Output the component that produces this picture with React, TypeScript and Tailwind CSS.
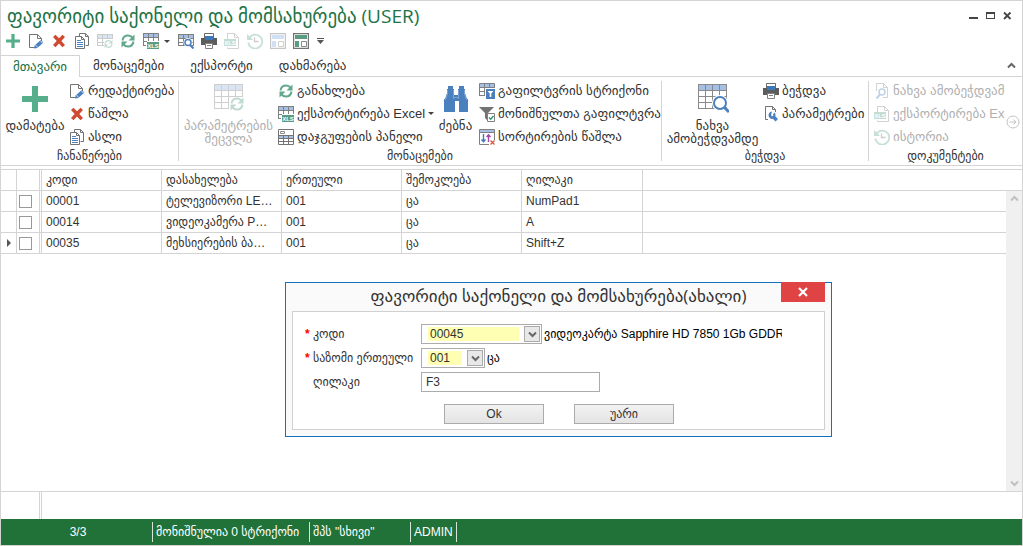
import type { ReactNode } from "react";

const FONT = "font-['Liberation_Sans','DejaVu_Sans',sans-serif]";

type IconProps = { className?: string };

function Svg({
  size = 16,
  box = 16,
  className = "",
  children,
}: {
  size?: number;
  box?: number;
  className?: string;
  children: ReactNode;
}) {
  return (
    <svg
      width={size}
      height={size}
      viewBox={`0 0 ${box} ${box}`}
      fill="none"
      aria-hidden="true"
      className={`shrink-0 ${className}`}
    >
      {children}
    </svg>
  );
}

function PlusIcon({ size = 14 }: { size?: number }) {
  return (
    <Svg size={size} box={26}>
      <path d="M10 0h6v10h10v6H16v10h-6V16H0v-6h10z" fill="#56af8a" />
    </Svg>
  );
}

function EditIcon() {
  return (
    <Svg>
      <path d="M7 14.5H1.500V1.500H9.500L13.500 5.500V8M9.500 1.500V5.500H13.500" stroke="#737373" />
      <path d="M6 15.500l.8-3.200 6-5.300 2.600 2.600-6 5.300z" fill="#4a80bd" />
      <path d="M7.200 11.800l2.600 2.600M12 7.500l2.700 2.700" stroke="#fff" strokeWidth=".8" />
    </Svg>
  );
}

function DeleteIcon() {
  return (
    <Svg>
      <path d="M2 4l2.500-2.300L8 5.300l3.500-3.600L14 4l-3.700 3.900L14 12l-2.500 2.300L8 10.500l-3.500 3.800L2 12l3.700-4.100z" fill="#cf4a30" />
    </Svg>
  );
}

function CopyIcon() {
  return (
    <Svg>
      <path d="M5.500 3.500v-3h6l3 3v9h-3M11.500.5v3h3" stroke="#737373" />
      <path d="M1.500 3.500h6l3 3v9h-9z" fill="#fff" stroke="#737373" />
      <path d="M7.500 3.500v3h3" stroke="#737373" />
      <path d="M3 7.500h4M3 9.500h6M3 11.500h6M3 13.500h6" stroke="#4a80bd" />
    </Svg>
  );
}

function Arrows() {
  return (
    <>
      <path d="M2.500 7.500C3 4.300 5.300 2.500 8 2.500c2 0 3.500.8 4.500 2.200" stroke="#62a88c" strokeWidth="2" />
      <path d="M14.500 1.500v6h-6z" fill="#62a88c" />
      <path d="M13.500 8.500C13 11.700 10.700 13.500 8 13.500c-2 0-3.500-.8-4.500-2.200" stroke="#62a88c" strokeWidth="2" />
      <path d="M1.500 14.500v-6h6z" fill="#62a88c" />
    </>
  );
}

function RefreshIcon() {
  return (
    <Svg>
      <Arrows />
    </Svg>
  );
}

function Grid() {
  return (
    <>
      <path d="M1 2h14v3H1z" fill="#a5c0e4" />
      <path d="M.5 1v12M5.500 1v12M10.500 1v12M15.500 1v12M0 1.500h16M0 5.500h16M0 9.500h16M0 12.500h16" stroke="#808080" shapeRendering="crispEdges" />
    </>
  );
}

function TableRefreshIcon() {
  return (
    <Svg className="opacity-40">
      <Grid />
      <path d="M7 6h9v10H7z" fill="#fff" />
      <g transform="translate(6.500 6) scale(.62)">
        <Arrows />
      </g>
    </Svg>
  );
}

function XlsLetters() {
  return (
    <>
      <path d="M4 9h12v7H4z" fill="#5a9c81" />
      <text x="10" y="15" textAnchor="middle" fontSize="6" fontWeight="700" fontFamily="Liberation Sans, sans-serif" fill="#fff">
        XLS
      </text>
    </>
  );
}

function TableXlsIcon() {
  return (
    <Svg>
      <path d="M1 1h14v3H1z" fill="#a5c0e4" />
      <path d="M0 .5h16M0 4.500h16M0 8.500h4M0 12.500h3M.5 0v13M5.500 0v8M10.500 0v8M15.500 0v8" stroke="#808080" shapeRendering="crispEdges" />
      <XlsLetters />
    </Svg>
  );
}

function PreviewIcon() {
  return (
    <Svg>
      <Grid />
      <circle cx="10" cy="9.500" r="4.500" fill="#fff" />
      <circle cx="10" cy="9.500" r="3" fill="#fff" stroke="#4a80bd" strokeWidth="1.500" />
      <path d="M12 12l3.500 3.500" stroke="#4a80bd" strokeWidth="2" />
    </Svg>
  );
}

function PrinterIcon() {
  return (
    <Svg>
      <path d="M3.500 5V.5h9V5" stroke="#6b6b6b" />
      <path d="M0 5h16v7H0z" fill="#5c5c5c" />
      <path d="M4 3h8v4H4z" fill="#3d78b8" />
      <path d="M4.500 10.500h7v5h-7z" fill="#fff" stroke="#808080" />
      <path d="M6 12.500h4" stroke="#808080" />
    </Svg>
  );
}

function DocXlsIcon() {
  return (
    <Svg className="opacity-35">
      <path d="M3.500 7V.5h7l4 4V8M3.500 14.500v1h11V8M10.500.5v4h4" stroke="#808080" />
      <path d="M0 6h12v7H0z" fill="#5a9c81" />
      <text x="6" y="12" textAnchor="middle" fontSize="6" fontWeight="700" fontFamily="Liberation Sans, sans-serif" fill="#fff">
        XLS
      </text>
    </Svg>
  );
}

function HistoryIcon() {
  return (
    <Svg className="opacity-35">
      <path d="M2.200 5A7 7 0 1 1 1.300 9.500" stroke="#62a88c" strokeWidth="1.800" />
      <path d="M0 1v6h6z" fill="#62a88c" />
      <path d="M7.500 4.500v4h4" stroke="#737373" strokeWidth="1.300" />
    </Svg>
  );
}

function LayoutIcon({ tone, className }: { tone: string } & IconProps) {
  return (
    <Svg className={className}>
      <path d="M.5.5h15v15H.5z" stroke="#737373" strokeWidth="1.400" />
      <path d="M2 2h12v4H2zM2 8h4v6H2z" fill={tone} />
      <path d="M8.500 8.500h5v5h-5z" stroke="#8a8a8a" />
    </Svg>
  );
}

function GroupPanelIcon() {
  return (
    <Svg>
      <path d="M1 7h4v2H1zM6 7h4v2H6zM11 7h4v2h-4z" fill="#a5c0e4" />
      <path d="M.5.5h15v15H.5zM.5 6.500h15M.5 9.500h15M.5 12.500h15M5.500 6.500v9M10.500 6.500v9" stroke="#737373" />
      <path d="M2.500 2.500h4v2h-4z" stroke="#8a8a8a" />
    </Svg>
  );
}

function FilterRowIcon() {
  return (
    <Svg>
      <path d="M1 1h14v3H1z" fill="#a5c0e4" />
      <path d="M.5 13V.5h15V5M.5 4.500h15M.5 8.500H6M.5 12.500H6M5.500.5V12M10.500.5v4" stroke="#808080" />
      <path d="M7 6h9v10H7z" fill="#4a80bd" />
      <path d="M8.500 8h6l-2.200 2.500V14h-1.600v-3.500z" fill="#fff" />
    </Svg>
  );
}

function FilterCheckedIcon() {
  return (
    <Svg>
      <path d="M0 1h15L9 7v8l-3-3V7z" fill="#737373" />
      <path d="M8.500 7.500h7v8h-7z" fill="#fff" stroke="#808080" />
      <path d="M10 11.500l1.700 1.700L14.500 10" stroke="#2f9468" strokeWidth="1.400" />
    </Svg>
  );
}

function ClearSortIcon() {
  return (
    <Svg>
      <path d="M1 1h14v2H1z" fill="#a5c0e4" />
      <path d="M10 15.500H.5V.5h15V11M.5 3.500h15" stroke="#808080" />
      <path d="M4.500 5v7M2.500 10.500l2 2.200 2-2.200" stroke="#3d78b8" strokeWidth="1.400" />
      <path d="M9.500 13V6M7.500 8l2-2.200 2 2.200" stroke="#a347b0" strokeWidth="1.400" />
      <path d="M11.500 11.500l4 4M15.500 11.500l-4 4" stroke="#dc5038" strokeWidth="1.200" />
    </Svg>
  );
}

function DocSearchIcon() {
  return (
    <Svg className="opacity-35">
      <path d="M2.500 8V.5h7l4 4v10H9M9.500.5v4h4" stroke="#808080" />
      <circle cx="8" cy="9" r="3" stroke="#4a80bd" strokeWidth="1.500" />
      <path d="M6 11.500l-3.500 4" stroke="#4a80bd" strokeWidth="2" />
    </Svg>
  );
}

function DocSettingsIcon() {
  return (
    <Svg>
      <path d="M5 13.500H2.500V.5h7l3 3V6M9.500.5v3h3" stroke="#737373" />
      <path d="M9 5.500a3.800 3.800 0 0 0-3.200 5.300 3.500 3.500 0 0 0 4 2l2.700 2.700 2.500-2.500-2.700-2.700a3.500 3.500 0 0 0-.8-3.800L10 8.500l.3 1.500-1.600.3-.6-1.600z" fill="#4a80bd" />
    </Svg>
  );
}

function BigTable({ children, className }: { children: ReactNode } & IconProps) {
  return (
    <Svg size={32} box={32} className={className}>
      <path d="M1 2h28v5H1z" fill="#a5c0e4" />
      <path
        d="M1.500 1v25M8.500 1v25M15.500 1v25M22.500 1v25M29.500 1v25M1 1.500h29M1 7.500h29M1 13.500h29M1 19.500h29M1 25.500h29"
        stroke="#8a8a8a"
        shapeRendering="crispEdges"
      />
      {children}
    </Svg>
  );
}

function BinocularsIcon() {
  return (
    <Svg size={26} box={26}>
      <path
        d="M5 0h5v3h1v6h4V3h1V0h5v3h1v4l2 6h1v13h-9V15h-4v11H1V13h1l2-6V3h1z"
        fill="#4a80bd"
      />
      <path d="M4.500 4v4l-2 6M21.500 4v4l2 6M10.500 4v9M15.500 4v9M11 11.500h4" stroke="#7ba3d1" />
    </Svg>
  );
}

function Caret() {
  return (
    <svg width="6" height="3" viewBox="0 0 6 3" aria-hidden="true" className="shrink-0">
      <path d="M0 0h6L3 3z" fill="#444" />
    </svg>
  );
}

function Chevron({ className = "" }: IconProps) {
  return (
    <svg width="9" height="7" viewBox="0 0 9 7" fill="none" aria-hidden="true" className={className}>
      <path d="M1 1.500l3.500 3.500L8 1.500" stroke="currentColor" strokeWidth="2" />
    </svg>
  );
}

function ToolButton({ label, className = "", children }: { label: string; className?: string; children: ReactNode }) {
  return (
    <button type="button" aria-label={label} className={`flex h-5 w-4 shrink-0 items-center justify-center ${className}`}>
      {children}
    </button>
  );
}

function SmallButton({
  icon,
  label,
  disabled = false,
  menu = false,
}: {
  icon: ReactNode;
  label: string;
  disabled?: boolean;
  menu?: boolean;
}) {
  return (
    <button
      type="button"
      disabled={disabled}
      className="flex h-[23px] items-center gap-[3px] whitespace-nowrap disabled:text-[#b0b0b0]"
    >
      {icon}
      <span>{label}</span>
      {menu && (
        <span className="ml-auto">
          <Caret />
        </span>
      )}
    </button>
  );
}

function BigButton({
  icon,
  lines,
  className,
  disabled = false,
}: {
  icon: ReactNode;
  lines: string[];
  className: string;
  disabled?: boolean;
}) {
  return (
    <button
      type="button"
      disabled={disabled}
      className={`flex shrink-0 flex-col items-center leading-[13px] whitespace-nowrap disabled:text-[#b0b0b0] ${className}`}
    >
      <span className="flex h-10 items-center">{icon}</span>
      {lines.map((line) => (
        <span key={line}>{line}</span>
      ))}
    </button>
  );
}

function RibbonGroup({ title, className, children }: { title: string; className: string; children: ReactNode }) {
  return (
    <section className={`flex flex-col pt-[2px] ${className}`}>
      <div className="flex h-[69px] min-w-0 items-start text-[13px]">{children}</div>
      <h2 className="text-center leading-4">{title}</h2>
    </section>
  );
}

function Divider() {
  return <div className="my-1 w-px shrink-0 bg-[#d4d4d4]" />;
}

const TABS = ["მთავარი", "მონაცემები", "ექსპორტი", "დახმარება"];

const COLUMNS = ["კოდი", "დასახელება", "ერთეული", "შემოკლება", "ღილაკი"];

const ROWS = [
  ["00001", "ტელევიზორი LE…", "001", "ცა", "NumPad1"],
  ["00014", "ვიდეოკამერა P…", "001", "ცა", "A"],
  ["00035", "მეხსიერების ბა…", "001", "ცა", "Shift+Z"],
];

function TitleBar() {
  return (
    <header className="flex h-[29px] items-center justify-between pr-[10px] pl-[6px]">
      <h1 className="font-['Open_Sans','DejaVu_Sans',sans-serif] text-[19px] leading-6 whitespace-nowrap text-[#217346]">
        ფავორიტი საქონელი და მომსახურება (USER)
      </h1>
      <div className="flex items-center gap-2 text-[#444]">
        <button type="button" aria-label="Minimize">
          <svg width="9" height="9" viewBox="0 0 9 9">
            <path d="M0 6h9v2H0z" fill="currentColor" />
          </svg>
        </button>
        <button type="button" aria-label="Maximize">
          <svg width="9" height="9" viewBox="0 0 9 9">
            <path d="M0 1h9v7H0zM1 3v4h7V3z" fill="currentColor" fillRule="evenodd" />
          </svg>
        </button>
        <button type="button" aria-label="Close">
          <svg width="9" height="9" viewBox="0 0 9 9" fill="none">
            <path d="M1 1.500l6.500 6.500M7.500 1.500L1 8" stroke="currentColor" strokeWidth="1.800" />
          </svg>
        </button>
      </div>
    </header>
  );
}

function QuickToolbar() {
  return (
    <div className="flex h-[22px] items-center gap-[7px] pl-1">
      <ToolButton label="დამატება"><PlusIcon /></ToolButton>
      <ToolButton label="რედაქტირება"><EditIcon /></ToolButton>
      <ToolButton label="წაშლა"><DeleteIcon /></ToolButton>
      <ToolButton label="ასლი"><CopyIcon /></ToolButton>
      <ToolButton label="პარამეტრების შეცვლა"><TableRefreshIcon /></ToolButton>
      <ToolButton label="განახლება"><RefreshIcon /></ToolButton>
      <ToolButton label="ექსპორტირება Excel"><TableXlsIcon /></ToolButton>
      <ToolButton label="Excel მენიუ" className="-mr-1 -ml-[7px]"><Caret /></ToolButton>
      <ToolButton label="ნახვა ამობეჭდვამდე"><PreviewIcon /></ToolButton>
      <ToolButton label="ბეჭდვა"><PrinterIcon /></ToolButton>
      <ToolButton label="ექსპორტირება"><DocXlsIcon /></ToolButton>
      <ToolButton label="ისტორია"><HistoryIcon /></ToolButton>
      <ToolButton label="ხედი"><LayoutIcon tone="#8fb3e6" className="opacity-40" /></ToolButton>
      <ToolButton label="პანელი"><LayoutIcon tone="#5a9c81" /></ToolButton>
      <ToolButton label="მეტი" className="-ml-1">
        <svg width="7" height="6" viewBox="0 0 7 6">
          <path d="M0 0h7v1H0zM0 2h7L3.500 6z" fill="#555" />
        </svg>
      </ToolButton>
    </div>
  );
}

function Ribbon() {
  return (
    <div className="flex h-[89px] border-b border-[#d4d4d4]">
      <RibbonGroup title="ჩანაწერები" className="w-[177px] shrink-0">
        <BigButton className="ml-1 w-[60px]" icon={<PlusIcon size={26} />} lines={["დამატება"]} />
        <div className="ml-1 flex flex-col">
          <SmallButton icon={<EditIcon />} label="რედაქტირება" />
          <SmallButton icon={<DeleteIcon />} label="წაშლა" />
          <SmallButton icon={<CopyIcon />} label="ასლი" />
        </div>
      </RibbonGroup>
      <Divider />
      <RibbonGroup title="მონაცემები" className="w-[482px] shrink-0">
        <BigButton
          className="w-[99px]"
          disabled
          icon={
            <BigTable className="opacity-40">
              <path d="M16 14h16v14H16z" fill="#fff" />
              <g transform="translate(16 13)">
                <Arrows />
              </g>
            </BigTable>
          }
          lines={["პარამეტრების", "შეცვლა"]}
        />
        <div className="flex w-[154px] flex-col">
          <SmallButton icon={<RefreshIcon />} label="განახლება" />
          <SmallButton icon={<TableXlsIcon />} label="ექსპორტირება Excel" menu />
          <SmallButton icon={<GroupPanelIcon />} label="დაჯგუფების პანელი" />
        </div>
        <BigButton className="w-[47px]" icon={<BinocularsIcon />} lines={["ძებნა"]} />
        <div className="flex flex-col">
          <SmallButton icon={<FilterRowIcon />} label="გაფილტვრის სტრიქონი" />
          <SmallButton icon={<FilterCheckedIcon />} label="მონიშნულთა გაფილტვრა" />
          <SmallButton icon={<ClearSortIcon />} label="სორტირების წაშლა" />
        </div>
      </RibbonGroup>
      <Divider />
      <RibbonGroup title="ბეჭდვა" className="w-[206px] shrink-0">
        <BigButton
          className="w-[101px]"
          icon={
            <BigTable>
              <circle cx="23" cy="20" r="8" fill="#fff" />
              <circle cx="23" cy="20" r="6" fill="#fff" stroke="#4a80bd" strokeWidth="2" />
              <path d="M27 24l5 5" stroke="#4a80bd" strokeWidth="3" />
            </BigTable>
          }
          lines={["ნახვა", "ამობეჭდვამდე"]}
        />
        <div className="flex flex-col">
          <SmallButton icon={<PrinterIcon />} label="ბეჭდვა" />
          <SmallButton icon={<DocSettingsIcon />} label="პარამეტრები" />
        </div>
      </RibbonGroup>
      <Divider />
      <RibbonGroup title="დოკუმენტები" className="min-w-0 flex-1">
        <div className="ml-[5px] flex min-w-0 flex-1 flex-col overflow-hidden">
          <SmallButton disabled icon={<DocSearchIcon />} label="ნახვა ამობეჭდვამდე" />
          <SmallButton disabled icon={<DocXlsIcon />} label="ექსპორტირება Excel" />
          <SmallButton disabled icon={<HistoryIcon />} label="ისტორია" />
        </div>
        <button type="button" aria-label="შემდეგი" className="mt-9 mr-[2px] ml-[1px]">
          <Svg size={14} box={14}>
            <circle cx="7" cy="7" r="6" stroke="#c4c4c4" />
            <path d="M3.500 7h6.500M7.500 4.500L10 7 7.500 9.500" stroke="#c4c4c4" />
          </Svg>
        </button>
      </RibbonGroup>
    </div>
  );
}

function DataGrid() {
  return (
    <div className="mt-[3px] flex flex-1 border-y border-[#d4d4d4]">
      <div className="min-w-0 flex-1">
        <table className="w-full table-fixed border-separate border-spacing-0 text-left">
          <colgroup>
            <col className="w-4" />
            <col className="w-[25px]" />
            <col className="w-[120px]" />
            <col className="w-[120px]" />
            <col className="w-[120px]" />
            <col className="w-[120px]" />
            <col className="w-[121px]" />
            <col />
          </colgroup>
          <thead>
            <tr className="h-[21px]">
              <th className="border-r border-b border-[#d4d4d4] p-0" />
              <th className="border-r-[3px] border-b border-[#d4d4d4] p-0 [border-right-style:double]" />
              {COLUMNS.map((name) => (
                <th key={name} className="border-r border-b border-[#d4d4d4] p-0 pl-1 font-normal">
                  {name}
                </th>
              ))}
              <th className="border-b border-[#d4d4d4] p-0" />
            </tr>
          </thead>
          <tbody>
            {ROWS.map((row, i) => (
              <tr key={row[0]} className="h-[21px]">
                <td className="border-r border-b border-[#d4d4d4] p-0">
                  {i === 2 && (
                    <svg width="4" height="8" viewBox="0 0 4 8" className="ml-[6px]">
                      <path d="M0 0l4 4-4 4z" fill="#555" />
                    </svg>
                  )}
                </td>
                <td className="border-r-[3px] border-b border-[#d4d4d4] p-0 [border-right-style:double]">
                  <input
                    type="checkbox"
                    aria-label={row[0]}
                    className="ml-[2px] block size-[13px] appearance-none border border-[#999] bg-white"
                  />
                </td>
                {row.map((cell, n) => (
                  <td key={n} className="truncate border-r border-b border-[#d4d4d4] p-0 pl-1">
                    {cell}
                  </td>
                ))}
                <td className="border-b border-[#d4d4d4] p-0" />
              </tr>
            ))}
          </tbody>
        </table>
      </div>
      <div className="flex w-4 flex-col">
        <div className="h-[21px] border-b border-[#d4d4d4]" />
        <div className="flex flex-1 flex-col items-center justify-between bg-[#f0f0f0] py-1 text-[#c0c0c0]">
          <Chevron className="rotate-180" />
          <Chevron />
        </div>
      </div>
    </div>
  );
}

function StatusBar() {
  return (
    <footer className="flex h-[26px] items-center bg-[#217239] text-white [&>span]:flex [&>span]:h-5 [&>span]:items-center [&>span]:border-r [&>span]:border-[#d4e6d9] [&>span]:pl-[3px] [&>span]:whitespace-nowrap">
      <span className="w-[152px] justify-center">3/3</span>
      <span className="w-[157px]">მონიშნულია 0 სტრიქონი</span>
      <span className="w-[101px]">შპს "სხივი"</span>
      <span className="w-[46px]">ADMIN</span>
    </footer>
  );
}

function Combo({ id, value, className }: { id: string; value: string; className: string }) {
  return (
    <div className={`flex h-5 items-center border border-[#ababab] bg-white pl-[6px] ${className}`}>
      <select id={id} className="h-[14px] min-w-0 flex-1 appearance-none bg-[#ffffb3] pl-[2px] leading-[14px]">
        <option>{value}</option>
      </select>
      <span className="pointer-events-none mr-px ml-[5px] flex h-4 w-4 items-center justify-center border border-[#ababab] bg-[#e8e8e8] text-[#666]">
        <Chevron />
      </span>
    </div>
  );
}

function Field({ id, label, required = false, children }: { id: string; label: string; required?: boolean; children: ReactNode }) {
  return (
    <div className="flex h-5 items-center">
      <label htmlFor={id} className="flex w-[116px] shrink-0 whitespace-nowrap">
        <span className="w-2 font-bold text-[#f00]">{required && "*"}</span>
        {label}
      </label>
      {children}
    </div>
  );
}

function ProductDialog() {
  return (
    <div
      role="dialog"
      aria-labelledby="dialog-title"
      className="absolute top-[281px] left-[284px] flex w-[547px] flex-col border border-[#0f73bd] bg-[#fafafa] px-[6px] pb-[6px]"
    >
      <div className="flex h-7 items-start">
        <h2
          id="dialog-title"
          className="flex-1 pt-px pl-11 text-center font-['Open_Sans','DejaVu_Sans',sans-serif] text-[17px] leading-6 whitespace-nowrap"
        >
          ფავორიტი საქონელი და მომსახურება(ახალი)
        </h2>
        <button type="button" aria-label="დახურვა" className="-mt-px flex h-5 w-11 items-center justify-center bg-[#e04343]">
          <svg width="10" height="10" viewBox="0 0 10 10">
            <path d="M1 1l8 8M9 1L1 9" stroke="#fff" strokeWidth="2.200" />
          </svg>
        </button>
      </div>
      <form className="flex flex-col gap-1 border border-[#d0d0d0] bg-white pt-3 pr-[42px] pb-[5px] pl-3">
        <Field id="code" label="კოდი" required>
          <Combo id="code" value="00045" className="w-[121px] shrink-0" />
          <span className="ml-[2px] overflow-hidden whitespace-nowrap text-black">
            ვიდეოკარტა Sapphire HD 7850 1Gb GDDR5
          </span>
        </Field>
        <Field id="unit" label="საზომი ერთეული" required>
          <Combo id="unit" value="001" className="w-16 shrink-0" />
          <span className="ml-[2px] text-black">ცა</span>
        </Field>
        <Field id="key" label="ღილაკი">
          <input id="key" defaultValue="F3" className="h-5 w-[179px] border border-[#ababab] bg-white px-1" />
        </Field>
        <div className="mt-2 ml-[139px] flex gap-[30px]">
          <button type="button" className="h-5 w-[100px] border border-[#ababab] bg-linear-to-b from-[#f2f2f2] to-[#e4e4e4]">
            Ok
          </button>
          <button type="button" className="h-5 w-[100px] border border-[#ababab] bg-linear-to-b from-[#f2f2f2] to-[#e4e4e4]">
            უარი
          </button>
        </div>
      </form>
    </div>
  );
}

export default function App() {
  return (
    <main
      className={`relative flex min-h-screen flex-col overflow-hidden border border-[#d4d4d4] bg-white text-[12px] leading-4 text-[#333] ${FONT}`}
    >
      <TitleBar />
      <QuickToolbar />
      <nav className="mt-[3px] flex h-[22px] items-stretch border-b border-[#d4d4d4] text-[13px]">
        {TABS.map((tab, i) => (
          <button
            key={tab}
            type="button"
            className={
              i === 0
                ? "-mb-px w-[79px] border-t border-r border-[#d4d4d4] bg-white text-[#217346]"
                : "px-[13px]"
            }
          >
            {tab}
          </button>
        ))}
        <button type="button" aria-label="აკეცვა" className="mr-[6px] ml-auto text-[#666]">
          <Chevron className="rotate-180" />
        </button>
      </nav>
      <Ribbon />
      <DataGrid />
      <div className="flex h-[27px]">
        <div className="w-[41px] border-r-[3px] border-double border-[#d4d4d4]" />
      </div>
      <StatusBar />
      <ProductDialog />
    </main>
  );
}
